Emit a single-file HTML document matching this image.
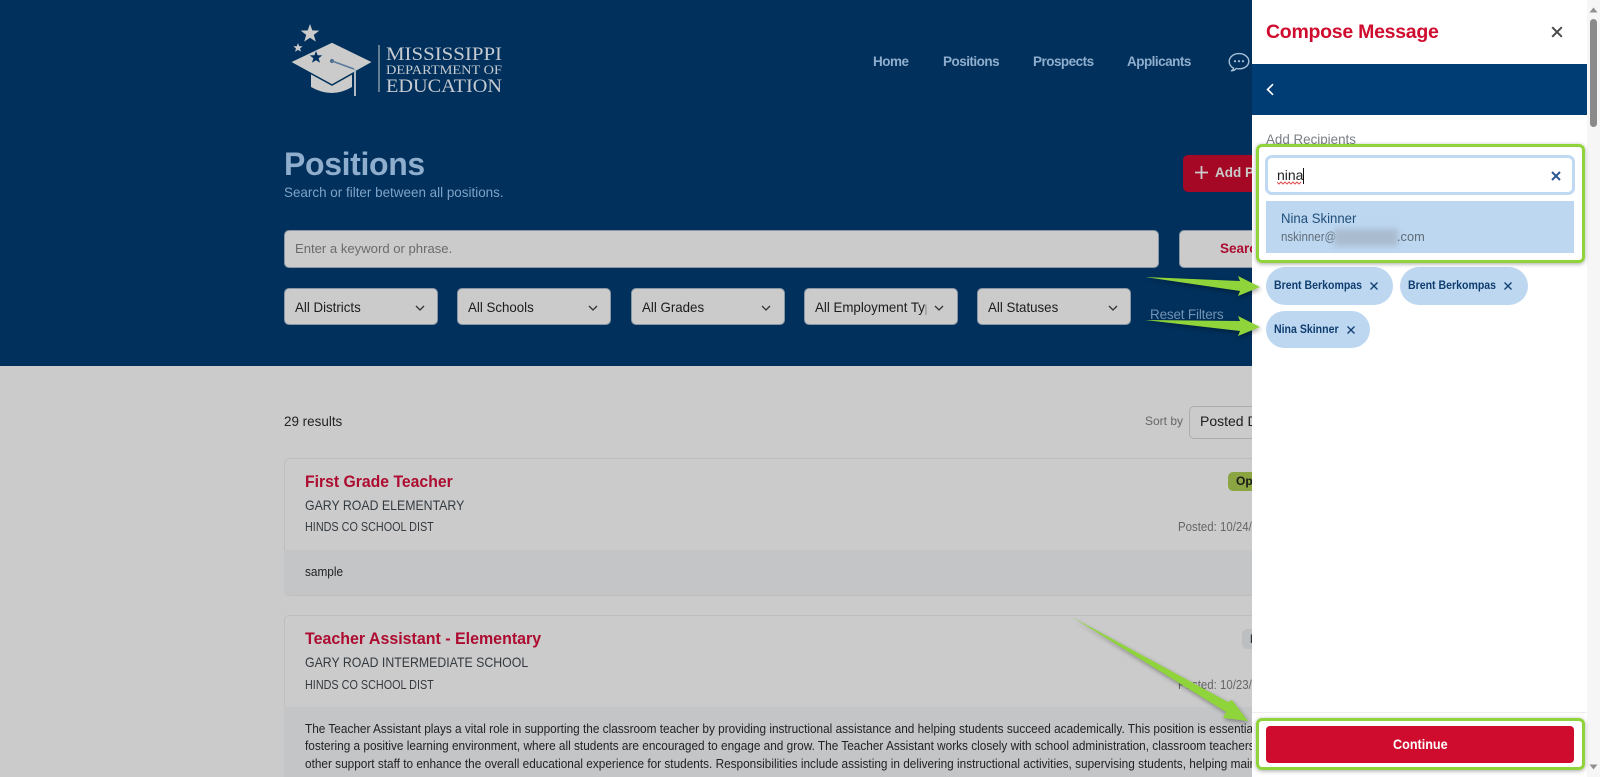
<!DOCTYPE html>
<html lang="en">
<head>
<meta charset="utf-8">
<title>Positions - Compose Message</title>
<style>
html,body{margin:0;padding:0;width:1600px;height:777px;overflow:hidden;background:#cbcbcb;font-family:"Liberation Sans",sans-serif}
#r{position:relative;width:1600px;height:777px;overflow:hidden}
.a{position:absolute}
.t{position:absolute;white-space:nowrap;height:20px;line-height:20px;transform-origin:left center}
.hd{left:0;top:0;width:1600px;height:366px;background:#00305b}
.nav{font-size:13.5px;font-weight:bold;color:#8fadcc;letter-spacing:-.52px}
.sel{position:absolute;top:288px;height:35px;background:#cbcbcb;border:1px solid #8a96a3;border-radius:5px;width:152px}
.sel span{position:absolute;left:10px;top:8px;height:20px;line-height:20px;font-size:14px;color:#1c1c1c;white-space:nowrap;overflow:hidden;transform:scaleX(.95);transform-origin:left center}
.sel svg{position:absolute;top:16px;width:10px;height:6px}
.card{position:absolute;left:284px;width:1100px;box-sizing:border-box;border:1px solid #bebebe;border-radius:5px;background:#cbcbcb;overflow:hidden}
.band{position:absolute;left:284px;width:1100px;background:#c4c5c7}
.title{font-size:16.5px;font-weight:bold;color:#ad0c30;transform:scaleX(.955)}
.school{font-size:14px;color:#333a40;transform:scaleX(.88)}
.dist{font-size:12.5px;color:#343a40;transform:scaleX(.865)}
.post{font-size:13px;color:#666;transform:scaleX(.88)}
.body{font-size:13px;color:#222;transform:scaleX(.908)}
.panel{left:1252px;top:0;width:348px;height:777px;background:#fff}
.chip{position:absolute;background:#bdd7f1;border-radius:19px;color:#0f3d6e;font-size:12px;font-weight:bold}
.chip b{position:absolute;left:8px;top:50%;margin-top:-11px;height:20px;line-height:20px;white-space:nowrap;transform:scaleX(.88);transform-origin:left center}
.chip svg{position:absolute;width:10px;height:10px;top:50%;margin-top:-5px}
svg{display:block}
</style>
</head>
<body>
<div id="r">
  <div class="a hd"></div>

  <!-- logo -->
  <svg class="a" style="left:280px;top:15px" width="230" height="90" viewBox="280 15 230 90">
    <polygon fill="#cbcbcb" points="310,24 312.3,30.4 319.3,30.6 313.8,34.9 315.8,41.6 310,37.7 304.2,41.6 306.2,34.9 300.7,30.6 307.7,30.4"/>
    <polygon fill="#cbcbcb" points="298,43 299.2,46.2 302.7,46.3 300,48.5 301,51.8 298,49.9 295,51.8 296,48.5 293.3,46.3 296.8,46.2"/>
    <path fill="#cbcbcb" d="M311 72 L332 82 L352 72 V87 Q332 99 311 87 Z"/>
    <polygon fill="#cbcbcb" stroke="#00305b" stroke-width="1.5" points="290,62 332,42 373,62 332,85"/>
    <polygon fill="#00305b" points="316,51 317.6,55.3 322.3,55.4 318.6,58.3 320,62.8 316,60.2 312,62.8 313.4,58.3 309.7,55.4 314.4,55.3"/>
    <circle cx="332" cy="61" r="2" fill="#4a6a8c"/>
    <path d="M332 61 L354 69" fill="none" stroke="#5a7a9a" stroke-width="1.6"/>
    <rect x="354" y="69" width="2" height="27" fill="#aeb9c4"/>
    <rect x="378.5" y="45" width="1" height="47" fill="#cbcbcb"/>
    <text x="386" y="60" font-family="Liberation Serif,serif" font-size="18.5" fill="#c6cbd1" textLength="116" lengthAdjust="spacingAndGlyphs">MISSISSIPPI</text>
    <text x="386" y="74" font-family="Liberation Serif,serif" font-size="13" fill="#c6cbd1" textLength="116" lengthAdjust="spacingAndGlyphs">DEPARTMENT OF</text>
    <text x="386" y="92" font-family="Liberation Serif,serif" font-size="19" fill="#c6cbd1" textLength="116" lengthAdjust="spacingAndGlyphs">EDUCATION</text>
  </svg>

  <!-- nav -->
  <div class="t nav" style="left:873px;top:52px">Home</div>
  <div class="t nav" style="left:943px;top:52px">Positions</div>
  <div class="t nav" style="left:1033px;top:52px">Prospects</div>
  <div class="t nav" style="left:1127px;top:52px">Applicants</div>
  <svg class="a" style="left:1227px;top:50px" width="24" height="24" viewBox="0 0 24 24">
    <path d="M4 20.8 C5.6 20.4 6.4 19.4 6.6 18.2 C3.8 16.8 2.2 14.4 2.2 11.4 C2.2 7.2 6.4 3.6 12 3.6 C17.6 3.6 21.8 7.2 21.8 11.2 C21.8 15.6 17.6 18.8 12 18.8 C11 18.8 10 18.7 9.2 18.5 C8 20 6 21 4 20.8 Z" fill="none" stroke="#a8c0d8" stroke-width="1.4"/>
    <circle cx="8" cy="11.2" r="1.1" fill="#a8c0d8"/><circle cx="12" cy="11.2" r="1.1" fill="#a8c0d8"/><circle cx="16" cy="11.2" r="1.1" fill="#a8c0d8"/>
  </svg>

  <!-- heading -->
  <div class="t" style="left:284px;top:146px;height:36px;line-height:36px;font-size:32px;font-weight:bold;color:#8fadcc;letter-spacing:-.35px">Positions</div>
  <div class="t" style="left:284px;top:183px;font-size:13.45px;color:#7fa3c7">Search or filter between all positions.</div>

  <div class="a" style="left:1183px;top:155px;width:120px;height:37px;background:#a50825;border-radius:5px"></div>
  <svg class="a" style="left:1194px;top:165px" width="15" height="15" viewBox="0 0 15 15"><path d="M7.5 1V14M1 7.5H14" stroke="#cbcbcb" stroke-width="1.8" fill="none"/></svg>
  <div class="t" style="left:1215px;top:163px;font-size:13.5px;font-weight:bold;color:#cbcbcb">Add Positions</div>

  <!-- search -->
  <div class="a" style="left:284px;top:230px;width:873px;height:36px;background:#cbcbcb;border:1px solid #8a96a3;border-radius:5px"></div>
  <div class="t" style="left:295px;top:239px;font-size:13.1px;color:#6b6b6b">Enter a keyword or phrase.</div>
  <div class="a" style="left:1179px;top:230px;width:120px;height:36px;background:#cbcbcb;border:1px solid #8a96a3;border-radius:5px"></div>
  <div class="t" style="left:1220px;top:239px;font-size:13.5px;font-weight:bold;color:#ad0c30">Search</div>

  <!-- filters -->
  <div class="sel" style="left:284px"><span style="width:116px">All Districts</span><svg style="left:130px" viewBox="0 0 10 6"><path d="M1 1L5 5L9 1" fill="none" stroke="#333" stroke-width="1.3"/></svg></div>
  <div class="sel" style="left:457px"><span style="width:116px">All Schools</span><svg style="left:130px" viewBox="0 0 10 6"><path d="M1 1L5 5L9 1" fill="none" stroke="#333" stroke-width="1.3"/></svg></div>
  <div class="sel" style="left:631px"><span style="width:116px">All Grades</span><svg style="left:129px" viewBox="0 0 10 6"><path d="M1 1L5 5L9 1" fill="none" stroke="#333" stroke-width="1.3"/></svg></div>
  <div class="sel" style="left:804px"><span style="width:117px">All Employment Types</span><svg style="left:129px" viewBox="0 0 10 6"><path d="M1 1L5 5L9 1" fill="none" stroke="#333" stroke-width="1.3"/></svg></div>
  <div class="sel" style="left:977px"><span style="width:116px">All Statuses</span><svg style="left:130px" viewBox="0 0 10 6"><path d="M1 1L5 5L9 1" fill="none" stroke="#333" stroke-width="1.3"/></svg></div>
  <div class="t" style="left:1150px;top:305px;font-size:13.5px;color:#7292b3;letter-spacing:-.18px">Reset Filters</div>

  <!-- results -->
  <div class="t" style="left:284px;top:411px;font-size:14px;color:#222;transform:scaleX(.96)">29 results</div>
  <div class="t" style="left:1145px;top:411px;font-size:12px;color:#666">Sort by</div>
  <div class="a" style="left:1189px;top:406px;width:120px;height:31px;border:1px solid #adadad;border-radius:5px"></div>
  <div class="t" style="left:1200px;top:411px;font-size:14px;color:#1c1c1c">Posted Date</div>

  <!-- card 1 -->
  <div class="card" style="top:458px;height:138px"></div>
  <div class="band" style="top:550px;height:45px;border-radius:0 0 5px 5px"></div>
  <div class="t title" style="left:305px;top:472px">First Grade Teacher</div>
  <div class="t school" style="left:305px;top:495px">GARY ROAD ELEMENTARY</div>
  <div class="t dist" style="left:305px;top:517px">HINDS CO SCHOOL DIST</div>
  <div class="a" style="left:1228px;top:472px;width:50px;height:19px;background:#8ba542;border-radius:5px"></div>
  <div class="t" style="left:1236px;top:472px;height:19px;line-height:19px;font-size:12px;font-weight:bold;color:#1a1a1a">Open</div>
  <div class="t post" style="left:1178px;top:517px">Posted: 10/24/2024</div>
  <div class="t body" style="left:305px;top:562px">sample</div>

  <!-- card 2 -->
  <div class="card" style="top:615px;height:200px"></div>
  <div class="band" style="top:707px;height:70px"></div>
  <div class="t title" style="left:305px;top:629px;transform:scaleX(.968)">Teacher Assistant - Elementary</div>
  <div class="t school" style="left:305px;top:652px">GARY ROAD INTERMEDIATE SCHOOL</div>
  <div class="t dist" style="left:305px;top:675px">HINDS CO SCHOOL DIST</div>
  <div class="a" style="left:1242px;top:629px;width:40px;height:20px;background:#bcbfc2;border-radius:5px"></div>
  <div class="t" style="left:1250px;top:629px;font-size:12px;font-weight:bold;color:#333">Draft</div>
  <div class="t post" style="left:1178px;top:675px">Posted: 10/23/2024</div>
  <div class="t body" style="left:305px;top:719px">The Teacher Assistant plays a vital role in supporting the classroom teacher by providing instructional assistance and helping students succeed academically. This position is essential in</div>
  <div class="t body" style="left:305px;top:736px">fostering a positive learning environment, where all students are encouraged to engage and grow. The Teacher Assistant works closely with school administration, classroom teachers, and</div>
  <div class="t body" style="left:305px;top:754px">other support staff to enhance the overall educational experience for students. Responsibilities include assisting in delivering instructional activities, supervising students, helping maintain</div>

  <!-- panel -->
  <div class="a panel">
    <div class="a" style="left:0;top:64px;width:335px;height:51px;background:#003d74"></div>
    <div class="a" style="right:0;top:0;width:13px;height:777px;background:#f6f6f6"></div>
    <div class="a" style="right:3px;top:19px;width:7px;height:108px;background:#8a8a8a;border-radius:4px"></div>
    <svg class="a" style="right:2px;top:7px" width="9" height="6" viewBox="0 0 9 6"><path d="M4.5 0.5L8.5 5.5H0.5Z" fill="#8f8f8f"/></svg>
    <svg class="a" style="right:2px;top:764px" width="9" height="6" viewBox="0 0 9 6"><path d="M4.5 5.5L8.5 0.5H0.5Z" fill="#8f8f8f"/></svg>
    <div class="a" style="left:0;top:712px;width:335px;height:1px;background:#eeeeee"></div>
  </div>
  <div class="t" style="left:1266px;top:20px;height:24px;line-height:24px;font-size:19.5px;font-weight:bold;color:#d00c2e;letter-spacing:-.27px">Compose Message</div>
  <svg class="a" style="left:1551px;top:26px" width="12" height="12" viewBox="0 0 12 12"><path d="M1.2 1.2L10.8 10.8M10.8 1.2L1.2 10.8" stroke="#4a4a4a" stroke-width="2" fill="none"/></svg>
  <svg class="a" style="left:1265px;top:83px" width="10" height="13" viewBox="0 0 10 13"><path d="M8 1.2L2.6 6.5L8 11.8" stroke="#fff" stroke-width="1.7" fill="none"/></svg>
  <div class="t" style="left:1266px;top:129px;font-size:14px;color:#7a7f85;transform:scaleX(.955)">Add Recipients</div>

  <!-- input -->
  <div class="a" style="left:1265px;top:155px;width:304px;height:34px;border:3px solid #c0d9f2;border-radius:7px;background:#fff"></div>
  <div class="t" style="left:1277px;top:165px;font-size:14px;color:#222">nina</div>
  <svg class="a" style="left:1277px;top:181px" width="25" height="4" viewBox="0 0 25 4"><path d="M0 1L2 3L4 1L6 3L8 1L10 3L12 1L14 3L16 1L18 3L20 1L22 3L24 1" fill="none" stroke="#e25555" stroke-width="1.1"/></svg>
  <div class="a" style="left:1303px;top:168px;width:1px;height:16px;background:#111"></div>
  <svg class="a" style="left:1551px;top:171px" width="10" height="10" viewBox="0 0 10 10"><path d="M1 1L9 9M9 1L1 9" stroke="#2f5597" stroke-width="2" fill="none"/></svg>

  <!-- dropdown -->
  <div class="a" style="left:1266px;top:201px;width:308px;height:52px;background:#bdd7f1;overflow:hidden">
    <div class="t" style="left:15px;top:7px;font-size:14px;color:#1f4e79;transform:scaleX(.94)">Nina Skinner</div>
    <div class="t" style="left:15px;top:26px;font-size:12.8px;color:#5f6b76;transform:scaleX(.9)">nskinner@</div>
    <div class="a" style="left:68px;top:28px;width:64px;height:17px;background:#a9bbcf;filter:blur(3px)"></div>
    <div class="t" style="left:131px;top:26px;font-size:12.8px;color:#5f6b76">.com</div>
  </div>

  <!-- chips -->
  <div class="chip" style="left:1266px;top:267px;width:127px;height:38px"><b>Brent Berkompas</b><svg style="left:103px" viewBox="0 0 10 10"><path d="M1.5 1.5L8.5 8.5M8.5 1.5L1.5 8.5" stroke="#0f3d6e" stroke-width="1.3" fill="none"/></svg></div>
  <div class="chip" style="left:1400px;top:267px;width:128px;height:38px"><b>Brent Berkompas</b><svg style="left:103px" viewBox="0 0 10 10"><path d="M1.5 1.5L8.5 8.5M8.5 1.5L1.5 8.5" stroke="#0f3d6e" stroke-width="1.3" fill="none"/></svg></div>
  <div class="chip" style="left:1266px;top:311px;width:104px;height:37px"><b>Nina Skinner</b><svg style="left:80px" viewBox="0 0 10 10"><path d="M1.5 1.5L8.5 8.5M8.5 1.5L1.5 8.5" stroke="#0f3d6e" stroke-width="1.3" fill="none"/></svg></div>

  <!-- continue -->
  <div class="a" style="left:1266px;top:726px;width:308px;height:37px;background:#d00c2e;border-radius:4px;color:#fff;font-size:14px;font-weight:bold;text-align:center;line-height:37px"><span style="display:inline-block;transform:scaleX(.9)">Continue</span></div>

  <!-- annotations -->
  <div class="a" style="left:1256px;top:144px;width:323px;height:113px;border:3px solid #8fd43a;border-radius:6px;box-shadow:0 1px 4px rgba(0,0,0,.35)"></div>
  <div class="a" style="left:1256px;top:718px;width:323px;height:46px;border:3px solid #8fd43a;border-radius:6px;box-shadow:0 1px 4px rgba(0,0,0,.35)"></div>
  <svg class="a" style="left:0;top:0;filter:drop-shadow(1px 2px 2px rgba(0,0,0,.35))" width="1600" height="777" viewBox="0 0 1600 777">
    <polygon fill="#8fd43a" points="1145,277 1240,281 1238,276 1260,287 1238,296 1240,291"/>
    <polygon fill="#8fd43a" points="1145,320 1240,321 1238,316 1260,327 1238,336 1240,331"/>
    <polygon fill="#8fd43a" points="1072,617 1228,702 1232,700 1248,721 1223,718 1226,712"/>
  </svg>
</div>
</body>
</html>
